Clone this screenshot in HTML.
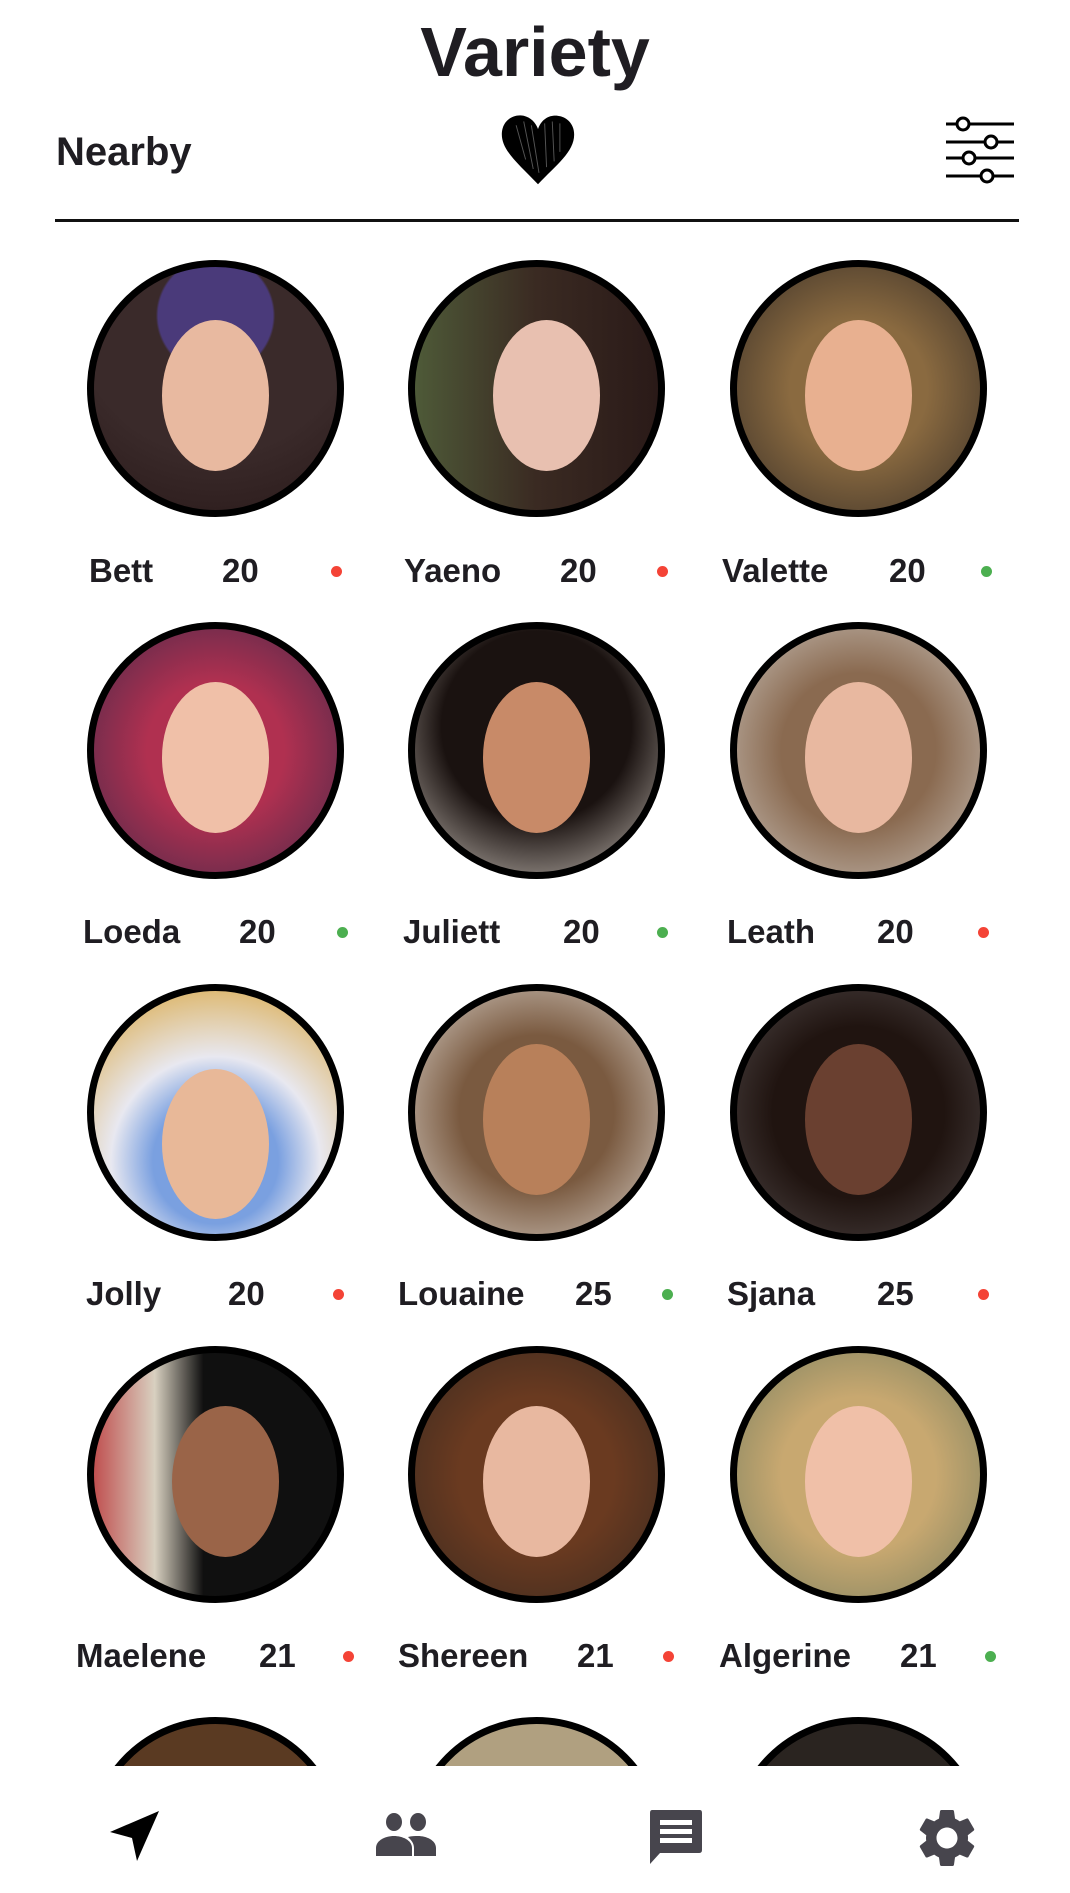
<!DOCTYPE html>
<html><head><meta charset="utf-8"><style>
*{margin:0;padding:0;box-sizing:border-box}
body{width:1070px;height:1893px;background:#fff;position:relative;overflow:hidden;font-family:"Liberation Sans",sans-serif;color:#1f1d22}
.abs{position:absolute}
.title{left:0;width:1070px;text-align:center;top:12px;font-size:70px;font-weight:bold;letter-spacing:0px}
.nearby{left:56px;top:130px;font-size:40px;font-weight:bold}
.line{left:55px;top:219px;width:964px;height:3px;background:#111}
.grid{left:0;top:240px;width:1070px;height:1526px;overflow:hidden}
.c{position:absolute;width:257px;height:257px;border-radius:50%;border:7px solid #000;overflow:hidden}
.c i{position:absolute;left:28%;top:22%;width:44%;height:62%;border-radius:50%;}
.l{position:absolute;font-size:33px;font-weight:bold;line-height:1}
.d{position:absolute;width:11px;height:11px;border-radius:50%}
.r{background:#f44336}.g{background:#4caf50}
</style></head><body>
<div class="abs title">Variety</div>
<div class="abs nearby">Nearby</div>
<svg class="abs" style="left:499px;top:112px" width="78" height="76" viewBox="0 0 82 76">
<path d="M41 74 C20 52 2 38 3 20 C4 6 16 0 26 2 C34 4 39 10 41 16 C43 10 48 3 57 2 C68 1 79 8 79 22 C79 40 60 54 41 74Z" fill="#000"/>
<path d="M18 12 L28 48 M26 8 L36 58 M34 12 L42 62 M48 10 L50 56 M56 8 L58 50 M64 10 L64 40" stroke="#555" stroke-width="1"/>
</svg>
<svg class="abs" style="left:944px;top:116px" width="82" height="74" viewBox="0 0 82 74" stroke="#000" fill="none" stroke-width="3">
<path d="M2 8 H12 M26 8 H70"/><circle cx="19" cy="8" r="6" fill="#fff"/>
<path d="M2 26 H40 M54 26 H70"/><circle cx="47" cy="26" r="6" fill="#fff"/>
<path d="M2 42 H18 M32 42 H70"/><circle cx="25" cy="42" r="6" fill="#fff"/>
<path d="M2 60 H36 M50 60 H70"/><circle cx="43" cy="60" r="6" fill="#fff"/>
</svg>
<div class="abs line"></div>
<div class="abs grid">
<div class="c" style="left:87px;top:20px;background:radial-gradient(circle at 50% 20%,#4a3a7a 0 25%,#3a2a2a 26% 60%,#2a1a1a)"><i style="background:#e8b9a0"></i></div>
<div class="c" style="left:408px;top:20px;background:linear-gradient(90deg,#4e5a38,#3a2a22 50%,#2a1a18)"><i style="background:#e8c0b0;left:32%"></i></div>
<div class="c" style="left:730px;top:20px;background:radial-gradient(circle,#8a6a40 40%,#3a3028)"><i style="background:#e8b090"></i></div>
<div class="l" style="left:89px;top:314px">Bett</div><div class="l" style="left:222px;top:314px">20</div><div class="d r" style="left:331px;top:326px"></div>
<div class="l" style="left:404px;top:314px">Yaeno</div><div class="l" style="left:560px;top:314px">20</div><div class="d r" style="left:657px;top:326px"></div>
<div class="l" style="left:722px;top:314px">Valette</div><div class="l" style="left:889px;top:314px">20</div><div class="d g" style="left:981px;top:326px"></div>
<div class="c" style="left:87px;top:382px;background:radial-gradient(circle,#b03050 40%,#4a2a4a)"><i style="background:#f0c0a8"></i></div>
<div class="c" style="left:408px;top:382px;background:radial-gradient(circle at 50% 40%,#1a1210 50%,#c8c0b8)"><i style="background:#c88a68"></i></div>
<div class="c" style="left:730px;top:382px;background:radial-gradient(circle,#8a6a50 45%,#c8c0b8)"><i style="background:#e8b8a0"></i></div>
<div class="l" style="left:83px;top:675px">Loeda</div><div class="l" style="left:239px;top:675px">20</div><div class="d g" style="left:337px;top:687px"></div>
<div class="l" style="left:403px;top:675px">Juliett</div><div class="l" style="left:563px;top:675px">20</div><div class="d g" style="left:657px;top:687px"></div>
<div class="l" style="left:727px;top:675px">Leath</div><div class="l" style="left:877px;top:675px">20</div><div class="d r" style="left:978px;top:687px"></div>
<div class="c" style="left:87px;top:744px;background:radial-gradient(circle at 50% 70%,#7aa0e0 30%,#e8e8f0 50%,#d8a030)"><i style="background:#e8b898;top:32%"></i></div>
<div class="c" style="left:408px;top:744px;background:radial-gradient(circle,#7a5a40 45%,#d8d0c8)"><i style="background:#b8805a"></i></div>
<div class="c" style="left:730px;top:744px;background:radial-gradient(circle,#201410 50%,#504848)"><i style="background:#6a4030"></i></div>
<div class="l" style="left:86px;top:1037px">Jolly</div><div class="l" style="left:228px;top:1037px">20</div><div class="d r" style="left:333px;top:1049px"></div>
<div class="l" style="left:398px;top:1037px">Louaine</div><div class="l" style="left:575px;top:1037px">25</div><div class="d g" style="left:662px;top:1049px"></div>
<div class="l" style="left:727px;top:1037px">Sjana</div><div class="l" style="left:877px;top:1037px">25</div><div class="d r" style="left:978px;top:1049px"></div>
<div class="c" style="left:87px;top:1106px;background:linear-gradient(90deg,#c05050,#d8d0c0 25%,#101010 45%)"><i style="background:#9a6448;left:32%"></i></div>
<div class="c" style="left:408px;top:1106px;background:radial-gradient(circle,#6a3a20 45%,#3a2a20)"><i style="background:#e8b8a0"></i></div>
<div class="c" style="left:730px;top:1106px;background:radial-gradient(circle,#c8a870 45%,#7a8060)"><i style="background:#f0c0a8"></i></div>
<div class="l" style="left:76px;top:1399px">Maelene</div><div class="l" style="left:259px;top:1399px">21</div><div class="d r" style="left:343px;top:1411px"></div>
<div class="l" style="left:398px;top:1399px">Shereen</div><div class="l" style="left:577px;top:1399px">21</div><div class="d r" style="left:663px;top:1411px"></div>
<div class="l" style="left:719px;top:1399px">Algerine</div><div class="l" style="left:900px;top:1399px">21</div><div class="d g" style="left:985px;top:1411px"></div>
<div class="c" style="left:87px;top:1477px;background:#5a3a22"></div>
<div class="c" style="left:408px;top:1477px;background:#b0a080"></div>
<div class="c" style="left:730px;top:1477px;background:#2a2420"></div>
</div>
<svg class="abs" style="left:108px;top:1808px" width="54" height="54" viewBox="0 0 54 54"><path d="M51 3 L2 24 L24 30 L29 53 Z" fill="#000"/></svg>
<svg class="abs" style="left:374px;top:1812px" width="64" height="44" viewBox="0 0 64 44" fill="#47454d">
<ellipse cx="20" cy="10" rx="8" ry="9"/><ellipse cx="44" cy="10" rx="8" ry="9"/>
<path d="M2 44 V36 C2 28 12 24 20 24 C28 24 38 28 38 36 V44Z"/><path d="M40 44 V36 C40 31 37 28 34 25 C38 24 41 24 44 24 C52 24 62 28 62 36 V44Z"/></svg>
<svg class="abs" style="left:648px;top:1808px" width="56" height="56" viewBox="0 0 56 56" fill="#47454d">
<path d="M4 2 H52 Q54 2 54 5 V42 Q54 45 51 45 H12 L2 56 V5 Q2 2 4 2Z"/>
<rect x="12" y="12" width="32" height="5" fill="#fff"/><rect x="12" y="21" width="32" height="5" fill="#fff"/><rect x="12" y="30" width="32" height="5" fill="#fff"/></svg>
<svg class="abs" style="left:912px;top:1803px" width="70" height="70" viewBox="0 0 24 24" fill="#47454d">
<path d="M19.14 12.94c.04-.3.06-.61.06-.94 0-.32-.02-.64-.07-.94l2.03-1.58a.49.49 0 0 0 .12-.61l-1.920-3.32a.488.488 0 0 0-.59-.22l-2.39.96c-.5-.38-1.03-.7-1.62-.94l-.36-2.54a.484.484 0 0 0-.48-.41h-3.840c-.24 0-.43.17-.47.41l-.36 2.54c-.59.24-1.13.57-1.62.94l-2.39-.96c-.22-.08-.47 0-.59.22L2.74 8.87c-.12.21-.08.47.12.61l2.03 1.58c-.05.3-.09.63-.09.94s.02.64.07.94l-2.03 1.58a.49.49 0 0 0-.12.61l1.92 3.32c.12.22.37.29.59.22l2.39-.96c.5.38 1.03.7 1.62.94l.36 2.54c.05.24.24.41.48.41h3.84c.24 0 .44-.17.47-.41l.36-2.54c.59-.24 1.13-.56 1.62-.94l2.39.96c.22.08.47 0 .59-.22l1.92-3.32c.12-.22.07-.47-.12-.61l-2.01-1.58zM12 15.6c-1.98 0-3.6-1.62-3.6-3.6s1.62-3.6 3.6-3.6 3.6 1.62 3.6 3.6-1.62 3.6-3.6 3.6z"/></svg>
</body></html>
